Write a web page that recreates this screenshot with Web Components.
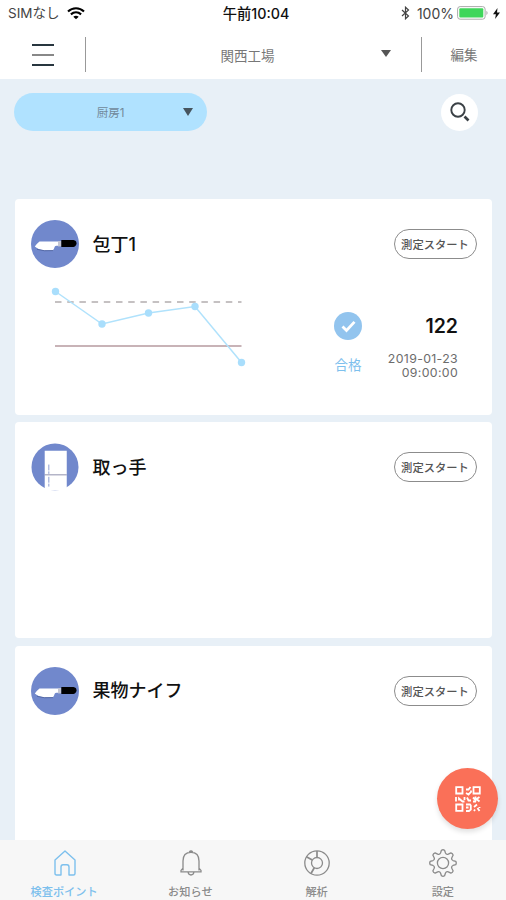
<!DOCTYPE html>
<html lang="ja">
<head>
<meta charset="utf-8">
<meta name="viewport" content="width=device-width, initial-scale=1">
<title>検査ポイント</title>
<style>
  html, body { margin: 0; height: 100%; }
  body {
    overflow: hidden;
    font-family: Inter, "Noto Sans CJK JP", sans-serif;
    --sky: #b0e2ff;
    --page: #e8f0f7;
    --blue: #7dc0ed;
    --coral: #fa7058;
  }
</style>
</head>
<body>
<inspection-app></inspection-app>

<script>
// Icons, all stroked with currentColor unless they say otherwise
function gearPath(cx, cy, outer, inner) {
  const pt = (r, deg) => {
    const a = deg * Math.PI / 180;
    return (cx + r * Math.sin(a)).toFixed(2) + " " + (cy - r * Math.cos(a)).toFixed(2);
  };
  let d = "";
  for (let i = 0; i < 8; i++) {
    const a = i * 45;
    d += (i ? "L" : "M") + pt(inner, a - 14) + "L" + pt(outer, a - 7);
    d += "Q" + pt(outer + 0.8, a) + " " + pt(outer, a + 7);
    d += "L" + pt(inner, a + 14) + "Q" + pt(inner - 1.6, a + 22.5) + " " + pt(inner, a + 31);
  }
  return d + "Z";
}

const icons = {
  wifi: `<svg width="18" height="13" viewBox="0 0 18 13" fill="none" stroke="#000" stroke-width="2.1"><path d="M1 4.5C5.5.2 12.5.2 17 4.5M3.900 7.400c3-2.700 7.200-2.700 10.200 0"/><path d="M9 12.300 6.300 9.700c1.600-1.300 3.800-1.300 5.400 0z" fill="#000" stroke="none"/></svg>`,
  bluetooth: `<svg width="9" height="14" viewBox="0 0 9 14" fill="none" stroke="#444" stroke-width="1.200"><path d="M1 4l6.500 6L4.500 12.800V1.200L7.500 4 1 10"/></svg>`,
  battery: `<svg width="32" height="14" viewBox="0 0 32 14"><rect x=".6" y=".6" width="27.500" height="12.600" rx="2.500" fill="#fff" stroke="#aaa"/><rect x="2.300" y="2.300" width="24" height="9.200" rx="1" fill="#3fd65b"/><path d="M29.500 4.800q2 2 0 4.500z" fill="#999"/></svg>`,
  bolt: `<svg width="7" height="11" viewBox="0 0 7 11"><path d="M4.500 0 0 6.300h2.900L2.100 11 7 4.500H4z" fill="#111"/></svg>`,
  search: `<svg width="20" height="20" viewBox="0 0 20 20" fill="none" stroke="#3a4045"><circle cx="8" cy="8" r="6.700" stroke-width="1.900"/><path d="M14.500 14.500l4 4" stroke-width="2.600"/></svg>`,
  check: `<svg width="28" height="28" viewBox="0 0 28 28"><circle cx="14" cy="14" r="14" fill="#92c4ee"/><path d="M8.500 14.400l4 4 8-8.500" fill="none" stroke="#fff" stroke-width="2.800"/></svg>`,
  knife: `<svg width="48" height="48" viewBox="0 0 48 48"><circle cx="24" cy="24" r="24" fill="#7188cc"/><path d="M3.800 26.500Q6 23.500 8.500 21.500H30v4.300h-3.500q-2-.6-2.800 1-.4 2-1.700 3.400H13Q7 29.500 3.800 26.500z" fill="#fff"/><path d="M6 29.300q7 2.200 16 1.300" fill="none" stroke="#4a5e9b" stroke-width=".8"/><path d="M27 21.200h3.500v5.200H27z" fill="#c3c5d3"/><path d="M30.300 20h12.200q3 .5 3 3.300T42.500 27H30.300z" fill="#000"/></svg>`,
  fridge: `<svg width="49" height="48" viewBox="0 0 49 48"><circle cx="24.500" cy="24" r="24" fill="#7188cc"/><path d="M0 45.500h49V48H0zM14 7.500h22.500V48H14z" fill="#fff"/><path d="M14 32h22.500" stroke="#8082a2" stroke-width=".9"/><path d="M18.200 21.500v9.500M18.200 34v10" stroke="#8b9bd0" stroke-width="1" stroke-dasharray="6 1"/></svg>`,
  qr: `<svg width="26" height="26" viewBox="0 0 26 26" fill="none" stroke="#fff" stroke-width="1.800"><path d="M1.200 1.200h6.300v6.300H1.200zM18.500 1.200h6.300v6.300h-6.300zM1.200 18.500h6.300v6.300H1.200z"/><path d="M11 3.500h2.500L15.500 1M11 7l2.500 1.500L16 6v-1.500M1 11v4.500M4 14.500v-2l3.500 3h2M9.500 11v3M12 11.500l1.500 3H16M11 18.500h4l.8 1v4L14 25h-3M11 21.500h2.500M18 11.500l2 2M20.500 10.500v5M24.500 11l-3 2 3 2.500M18 15.500h3M19 21l3-2.500M24.500 21v1M19 25l1-1.500M22.500 22l2 3"/></svg>`,
  home: `<svg width="22" height="26" viewBox="0 0 22 26" fill="none" stroke="currentColor" stroke-width="1.400" stroke-linejoin="round"><path d="M1 10 11 1l10 9v13.500q0 1.500-1.500 1.500H15v-8q0-2.200-2-2.200H9q-2 0-2 2.200v8H2.500Q1 25 1 23.500z"/></svg>`,
  bell: `<svg width="22" height="26" viewBox="0 0 22 26" fill="none" stroke="currentColor" stroke-width="1.300"><path d="M9.200 2.200q1.800-2.400 3.600 0M3 20.500V11q0-8.600 8-8.600T19 11v9.500M3 18.300 1 20.400v1.500h20v-1.500l-2-2.100M8 22q.5 3 3 3t3-3"/></svg>`,
  analysis: `<svg width="26" height="26" viewBox="0 0 26 26" fill="none" stroke="currentColor" stroke-width="1.300"><circle cx="13" cy="13" r="12.200"/><circle cx="13" cy="13" r="5.500"/><path d="M13 1v6.500M2.400 6.800l5.900 3.300M7 23.500l3.300-5.700" stroke-width="1.700"/></svg>`,
  gear: `<svg width="28" height="28" viewBox="0 0 28 28" fill="none" stroke="currentColor" stroke-width="1.300" stroke-linejoin="round"><path d="${gearPath(14, 14, 12.9, 10.3)}"/><circle cx="14" cy="14" r="5.600"/></svg>`
};

class UiIcon extends HTMLElement {
  constructor() {
    super();
    this.attachShadow({ mode: "open" });
  }

  connectedCallback() {
    this.shadowRoot.innerHTML = `
      <style>
        :host { display: inline-flex; flex: none; }
        svg { display: block; }
      </style>
      ${icons[this.getAttribute("name")] || ""}`;
  }
}

class StatusBar extends HTMLElement {
  constructor() {
    super();
    this.attachShadow({ mode: "open" });
  }

  connectedCallback() {
    this.shadowRoot.innerHTML = `
      <style>
        :host {
          display: grid;
          grid-template-columns: 1fr auto 1fr;
          align-items: center;
          height: 27px;
          padding: 0 6px 0 8px;
          background: #fff;
          color: #444;
          font-size: 13.5px;
          line-height: 27px;
          white-space: nowrap;
        }
        .left, .right { display: flex; align-items: center; height: 27px; }
        .left { gap: 8px; }
        .time { color: #111; font-weight: 500; font-size: 14.3px; margin-left: 4px; }
        .right { justify-content: flex-end; }
        .pct { margin: 0 3px 0 7px; font-size: 14px; }
        ui-icon { margin-bottom: 1px; }
        ui-icon[name="bolt"] { margin-left: 4px; }
      </style>
      <div class="left"><span>SIMなし</span><ui-icon name="wifi"></ui-icon></div>
      <div class="time">午前10:04</div>
      <div class="right">
        <ui-icon name="bluetooth"></ui-icon><span class="pct">100%</span>
        <ui-icon name="battery"></ui-icon><ui-icon name="bolt"></ui-icon>
      </div>`;
  }
}

class AppHeader extends HTMLElement {
  constructor() {
    super();
    this.attachShadow({ mode: "open" });
  }

  connectedCallback() {
    this.shadowRoot.innerHTML = `
      <style>
        :host {
          display: grid;
          grid-template-columns: 85px 1fr 84px;
          align-items: center;
          height: 52px;
          background: #fff;
          color: #777;
          font-size: 13.5px;
        }
        .menu { display: grid; gap: 8px; width: 22px; margin-left: 31.5px; padding-top: 3px; }
        .menu i { height: 2px; background: #28363f; }
        .menu i:nth-child(2) { background: #888; }
        .place {
          display: grid;
          grid-template-columns: 1fr 36px;
          align-items: center;
          height: 35px;
          margin-top: 3px;
          border-left: 1.5px solid #999;
          border-right: 1.5px solid #999;
        }
        .name { text-align: center; padding-left: 24px; }
        .arrow { border: 5px solid transparent; border-top: 7px solid #555; border-bottom: 0; width: 0; margin: -2px 0 0 -4px; }
        .edit { text-align: center; padding-top: 2px; }
      </style>
      <div class="menu"><i></i><i></i><i></i></div>
      <div class="place"><span class="name"><slot></slot></span><span class="arrow"></span></div>
      <div class="edit"><slot name="action"></slot></div>`;
  }
}

class RoomFilter extends HTMLElement {
  constructor() {
    super();
    this.attachShadow({ mode: "open" });
  }

  connectedCallback() {
    this.shadowRoot.innerHTML = `
      <style>
        :host {
          display: flex;
          justify-content: space-between;
          align-items: center;
          padding: 14px 28px 0 14px;
        }
        .pill {
          display: grid;
          grid-template-columns: 1fr 24px;
          align-items: center;
          box-sizing: border-box;
          width: 193px;
          height: 38px;
          padding-left: 24px;
          border-radius: 19px;
          background: var(--sky);
          color: #71889a;
          font-size: 11.5px;
          text-align: center;
        }
        .arrow { border: 5.5px solid transparent; border-top: 8px solid #46545e; border-bottom: 0; width: 0; }
        .search {
          display: grid;
          place-items: center;
          width: 37px;
          height: 37px;
          border-radius: 50%;
          background: #fff;
        }
      </style>
      <div class="pill"><span><slot></slot></span><span class="arrow"></span></div>
      <div class="search"><ui-icon name="search"></ui-icon></div>`;
  }
}

class TrendChart extends HTMLElement {
  constructor() {
    super();
    this.attachShadow({ mode: "open" });
  }

  connectedCallback() {
    const values = this.getAttribute("points").split(" ");
    const dots = values.map(p => {
      const [x, y] = p.split(",");
      return `<circle cx="${x}" cy="${y}" r="3.7" fill="#a9defc"/>`;
    }).join("");
    this.shadowRoot.innerHTML = `
      <style>
        :host { display: block; }
        svg { display: block; }
      </style>
      <svg width="196" height="84" viewBox="0 0 196 84" fill="none">
        <path d="M5 16h186.500" stroke="#b3adaf" stroke-width="1.500" stroke-dasharray="6.500 5.700"/>
        <path d="M5 60h186.500" stroke="#b69a9f" stroke-width="1.600"/>
        <polyline points="${values.join(" ")}" stroke="#b0e2fc" stroke-width="1.500"/>
        ${dots}
      </svg>`;
  }
}

class PointCard extends HTMLElement {
  constructor() {
    super();
    this.attachShadow({ mode: "open" });
  }

  connectedCallback() {
    this.shadowRoot.innerHTML = `
      <style>
        :host {
          display: block;
          flex: none;
          box-sizing: border-box;
          height: 215.5px;
          padding: 21px 15.5px 0 16px;
          border-radius: 4px;
          background: #fff;
        }
        header { display: flex; align-items: center; height: 48px; }
        h2 { flex: 1; margin: 1px 0 0 13.5px; color: #111; font-size: 18px; font-weight: 500; line-height: 26px; }
        ui-icon { width: 48px; }
        button {
          box-sizing: border-box;
          width: 83px;
          height: 30px;
          padding: 0;
          border: 1px solid #8c8c8c;
          border-radius: 15px;
          background: #fff;
          color: #555;
          font: 500 11.3px Inter, "Noto Sans CJK JP", sans-serif;
          white-space: nowrap;
        }
      </style>
      <header>
        <ui-icon name="${this.getAttribute("icon")}"></ui-icon>
        <h2>${this.getAttribute("label")}</h2>
        <button>測定スタート</button>
      </header>
      <slot></slot>`;
  }
}

class PointResult extends HTMLElement {
  constructor() {
    super();
    this.attachShadow({ mode: "open" });
  }

  connectedCallback() {
    this.shadowRoot.innerHTML = `
      <style>
        :host { display: flex; padding: 18px 18.5px 0 19px; }
        trend-chart { flex: 1; }
        .judge { width: 28px; padding-top: 26px; color: var(--blue); font-size: 13.5px; line-height: 20px; text-align: center; white-space: nowrap; }
        .judge ui-icon { display: flex; }
        .judge span { display: block; margin-top: 15px; }
        .data { width: 96px; padding-top: 27px; text-align: right; }
        .value { color: #111; font-size: 19.5px; font-weight: 600; line-height: 26px; }
        .date { margin-top: 13px; color: #6c6c6c; font-size: 12.3px; line-height: 14px; letter-spacing: .35px; }
      </style>
      <trend-chart points="${this.getAttribute("points")}"></trend-chart>
      <div class="judge"><ui-icon name="check"></ui-icon><span><slot name="judge"></slot></span></div>
      <div class="data">
        <div class="value"><slot name="value"></slot></div>
        <div class="date"><slot name="date"></slot><br><slot name="time"></slot></div>
      </div>`;
  }
}

class TabItem extends HTMLElement {
  constructor() {
    super();
    this.attachShadow({ mode: "open" });
  }

  connectedCallback() {
    this.shadowRoot.innerHTML = `
      <style>
        :host { display: flex; flex-direction: column; align-items: center; flex: 1; color: #8b8b8b; font-size: 11.2px; }
        :host([active]) { color: var(--blue); }
        .icon { display: grid; place-items: center; height: 28px; margin: 9px 0 0 1px; }
        .text { margin-top: 7px; line-height: 16px; font-weight: 500; white-space: nowrap; }
      </style>
      <div class="icon"><ui-icon name="${this.getAttribute("icon")}"></ui-icon></div>
      <div class="text"><slot></slot></div>`;
  }
}

class InspectionApp extends HTMLElement {
  constructor() {
    super();
    this.attachShadow({ mode: "open" });
  }

  connectedCallback() {
    this.render();
  }

  render() {
    this.shadowRoot.innerHTML = `
      <style>
        :host { display: flex; flex-direction: column; height: 100vh; background: var(--page); position: relative; }
        .list {
          display: flex;
          flex-direction: column;
          flex: 1;
          gap: 7.8px;
          min-height: 0;
          margin-top: 68px;
          padding: 0 14px 0 15px;
          overflow: hidden;
        }
        nav { display: flex; flex: none; height: 60px; padding-left: 1px; background: #f7f7f7; }
        /* scan button floats over the list */
        .scan {
          position: absolute;
          right: 8px;
          bottom: 71px;
          display: grid;
          place-items: center;
          width: 61px;
          height: 61px;
          border-radius: 50%;
          background: var(--coral);
          box-shadow: 0 3px 5px rgba(0, 0, 0, .12);
        }
      </style>
      <status-bar></status-bar>
      <app-header>関西工場<span slot="action">編集</span></app-header>
      <room-filter>厨房1</room-filter>
      <div class="list">
        <point-card icon="knife" label="包丁1">
          <point-result points="5.5,5.5 52,38 98.5,27 145,20.5 191.5,76.5">
            <span slot="judge">合格</span>
            <span slot="value">122</span>
            <span slot="date">2019-01-23</span>
            <span slot="time">09:00:00</span>
          </point-result>
        </point-card>
        <point-card icon="fridge" label="取っ手"></point-card>
        <point-card icon="knife" label="果物ナイフ"></point-card>
      </div>
      <nav>
        <tab-item icon="home" active>検査ポイント</tab-item>
        <tab-item icon="bell">お知らせ</tab-item>
        <tab-item icon="analysis">解析</tab-item>
        <tab-item icon="gear">設定</tab-item>
      </nav>
      <div class="scan"><ui-icon name="qr"></ui-icon></div>`;
  }
}

customElements.define("ui-icon", UiIcon);
customElements.define("status-bar", StatusBar);
customElements.define("app-header", AppHeader);
customElements.define("room-filter", RoomFilter);
customElements.define("trend-chart", TrendChart);
customElements.define("point-card", PointCard);
customElements.define("point-result", PointResult);
customElements.define("tab-item", TabItem);
customElements.define("inspection-app", InspectionApp);
</script>
</body>
</html>
